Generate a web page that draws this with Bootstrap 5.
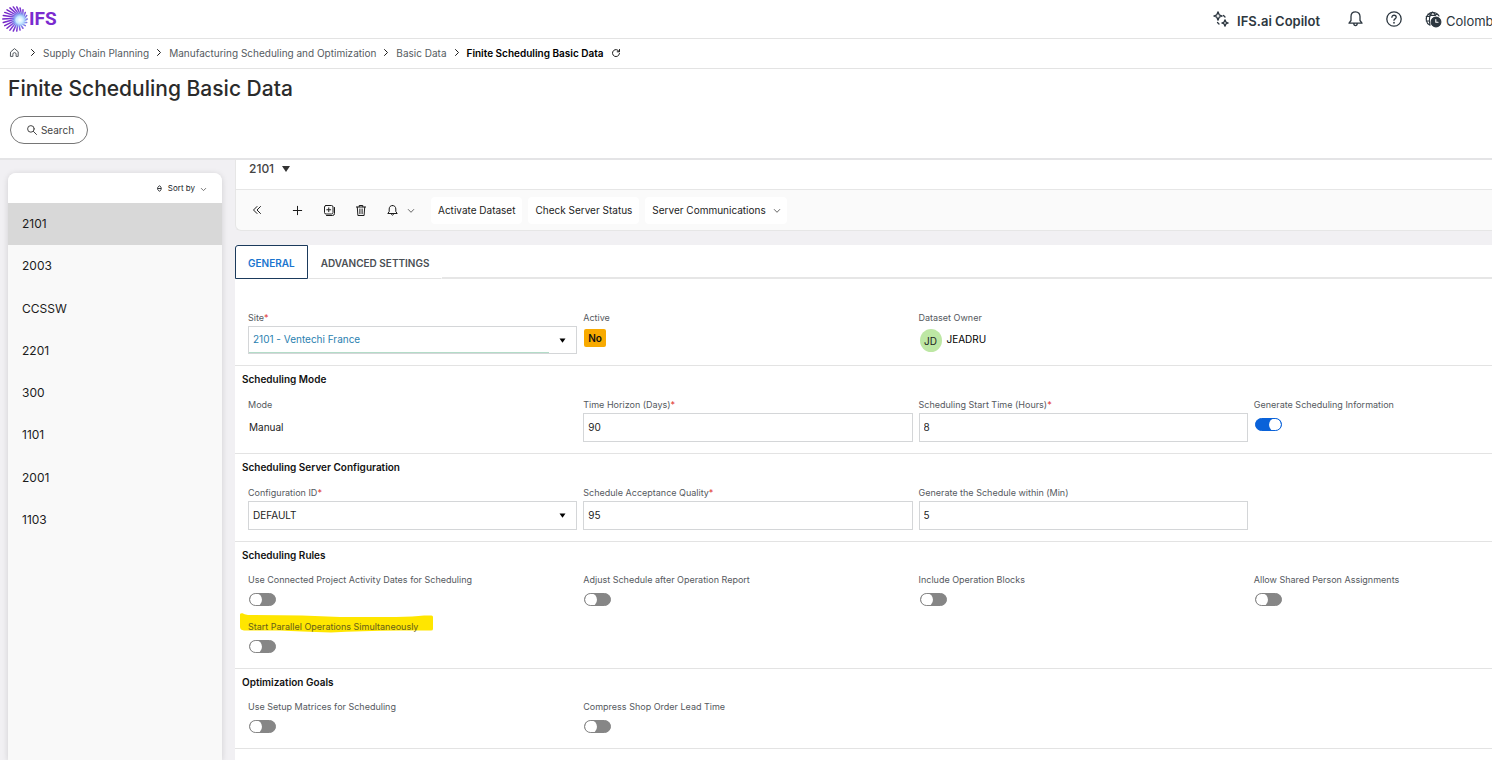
<!DOCTYPE html>
<html lang="en">
<head>
<meta charset="utf-8">
<meta name="viewport" content="width=device-width, initial-scale=1">
<title>Finite Scheduling Basic Data</title>
<link rel="stylesheet" href="https://cdn.jsdelivr.net/npm/bootstrap@5.3.0/dist/css/bootstrap.min.css">
<style>
  body { font-family: Inter, Roboto, sans-serif; font-size: 10px; line-height: 14px; color: #1c1c1c; background: #f1f0f3; }
  svg { display: block; fill: none; stroke: currentColor; stroke-linecap: round; stroke-linejoin: round; overflow: visible; flex: none; }
  .app { height: 100vh; overflow: hidden; }
  .line { border-color: #e3e3e3 !important; }

  .topbar { height: 39px; color: #2d3740; font-size: 13px; line-height: 18px; }
  .topbar .btn { --bs-btn-padding-x: 0; --bs-btn-padding-y: 0; --bs-btn-border-width: 0; --bs-btn-font-size: 13px; --bs-btn-line-height: 18px; --bs-btn-color: #2d3740; }
  .brand-mark { margin: 0 1px 0 2px; }
  .brand-text { font: 700 19px/24px Roboto, sans-serif; color: #7a2bcf; }
  .actions { gap: 23px; }
  .copilot { margin-right: 5px; }
  .place { width: 67px; overflow: hidden; white-space: nowrap; }

  .trail { height: 30px; padding: 0 10px 2px; gap: 8px; color: #1c1c1c; }
  .trail a { color: #555b61; text-decoration: none; }
  .trail .sep { width: 4px; height: 7px; }
  .page-head { height: 91px; padding: 6px 8px 0; border-bottom: 2px solid #e4e4e6; }
  .page-head h1 { font-size: 21px; line-height: 28px; font-weight: 500; color: #2b2b2b; margin: 0 0 13px; }
  .search-btn { --bs-btn-padding-x: 13px; --bs-btn-padding-y: 0; --bs-btn-font-size: 10px; --bs-btn-border-color: #767676; --bs-btn-color: #444; width: 78px; height: 28px; margin-left: 2px; padding-left: 16px; }

  .side { width: 214px; margin: 13px 13px 0 8px; background: #f9f9f9; border-radius: 8px 8px 0 0; box-shadow: 0 1px 6px rgba(0,0,0,.14); overflow: hidden; }
  .side-head { height: 30px; background: #fff; }
  .side-head .btn { --bs-btn-padding-x: 16px; --bs-btn-padding-y: 0; --bs-btn-font-size: 8px; --bs-btn-border-width: 0; gap: 6px; }
  .records { height: 338px; display: grid; grid-auto-rows: 1fr; --bs-list-group-bg: transparent; }
  .records .list-group-item { border: 0; padding: 0 14px; display: flex; align-items: center; font-size: 12px; color: #1c1c1c; }
  .records .list-group-item.active { background: #d8d8d8; margin: 0; }

  .panel-top { background: #fafafa; border: solid #e6e6e6; border-width: 0 0 1px 1px; border-bottom-left-radius: 6px; margin-bottom: 14px; overflow: hidden; }
  .record-bar { height: 30px; padding: 0 13px; background: #fff; border-bottom: 1px solid #e6e6e6; }
  .record-bar .btn { --bs-btn-padding-x: 0; --bs-btn-padding-y: 0; --bs-btn-border-width: 0; --bs-btn-font-size: 12px; --bs-btn-line-height: 18px; --bs-btn-color: #444; --bs-btn-font-weight: 500; gap: 8px; }
  .tools { height: 40px; padding-left: 5px; }
  .tools .btn { --bs-btn-padding-x: 6px; --bs-btn-padding-y: 0; --bs-btn-border-width: 0; --bs-btn-font-size: 10px; --bs-btn-border-radius: 4px; --bs-btn-color: #1c1c1c; height: 27px; white-space: nowrap; }
  .tools .icon-btn { width: 32px; }
  .tools .first { margin-right: 8px; }
  .tools .bell-btn { width: 54px; gap: 10px; padding-left: 10px; }
  .tools .cmd { background: #fff; padding: 0 7px; margin-right: 6px; }
  .chev { margin-top: 2px; color: #555; }

  .tabs { --bs-nav-tabs-border-width: 0; --bs-nav-link-padding-x: 12px; --bs-nav-link-padding-y: 0; background: #fff; }
  .tabs .nav-link { height: 34px; padding-top: 2px; font-size: 10px; font-weight: 600; line-height: 14px; color: #4a4f54; border: 1px solid transparent; border-bottom-color: #e3e3e3; border-radius: 0; margin: 0; }
  .tabs .nav-link.active { color: #1a75cf; border-color: #1b3a5c; border-top-left-radius: 3px; }
  .tab-rest { border-bottom: 2px solid #e6e6e6; }

  .form-panel { background: #fff; overflow: hidden; }
  .group { border-top: 1px solid #e3e3e3; padding: 6px 7px 11px; }
  .group h2 { font-size: 10px; line-height: 14px; font-weight: 600; margin: 0 0 13px; color: #111; }
  .group.plain { border-top: 0; padding-top: 33px; }
  .group.switches { padding-bottom: 15px; }
  .group.switches h2 { margin-bottom: 12px; }
  .group:last-child { padding-top: 9px; }
  /* the form is wider than the pane: its last column runs off the right side */
  .fields { --bs-gutter-x: 6px; --bs-gutter-y: 15px; width: calc(100% + 98px); margin-left: 3px; margin-right: 0; }
  .lbl { display: block; font-size: 9px; line-height: 12px; color: #55595e; }
  .lbl i { color: #e0322f; font-style: normal; }
  .box { height: 29px; margin-top: 2px; padding: 0 4px 1px; border: 1px solid #d4d6d8; border-radius: 0; font-size: 10px; line-height: 14px; color: #1c1c1c; }
  .val { height: 28px; margin: 2px 0 1px; padding-left: 1px; display: flex; align-items: center; }
  select.box { --bs-form-select-bg-img: none; background: url("data:image/svg+xml,%3Csvg xmlns='http://www.w3.org/2000/svg' viewBox='0 0 6 5'%3E%3Cpath d='M0 .5h6L3 4.8z'/%3E%3C/svg%3E") right 10px center / 7px 5px no-repeat; }
  select.site { height: 28px; padding-bottom: 2px; color: #2a7fb0; background: linear-gradient(#b3dcc8, #b3dcc8) left bottom / calc(100% - 27px) 1px no-repeat, url("data:image/svg+xml,%3Csvg xmlns='http://www.w3.org/2000/svg' viewBox='0 0 6 5'%3E%3Cpath d='M0 .5h6L3 4.8z'/%3E%3C/svg%3E") right 10px center / 7px 5px no-repeat; }
  .no-tag { margin: 5px 0 0 1px; padding: 2px 4px; height: 18px; font-size: 10px; line-height: 14px; font-weight: 600; background: #f8aa00; color: #111; border-radius: 2px; }
  .owner { margin: 5px 0 0 1px; gap: 5px; }
  .avatar { width: 22px; height: 23px; border-radius: 50%; background: #bde7a4; }
  .owner-name { padding-top: 3px; }
  .form-switch.tog { padding: 0; margin: 7px 0 0 1px; min-height: 13px; line-height: 0; }
  .form-switch.tog .form-check-input { float: none; display: block; margin: 0; width: 27px; height: 13px; border: 1px solid #868686; border-radius: 7px; background: #868686 url("data:image/svg+xml,%3Csvg xmlns='http://www.w3.org/2000/svg' viewBox='0 0 12 12'%3E%3Ccircle cx='6' cy='6' r='6' fill='white'/%3E%3C/svg%3E") left center / 12px 12px no-repeat; }
  .form-switch.tog .form-check-input:checked { background-color: #0a62d9; border-color: #0a62d9; background-position: right center; }
  .marked { position: relative; z-index: 0; }
  .marked svg { position: absolute; z-index: -1; left: -8px; top: -8px; fill: #ffe600; stroke: none; }
  .marked .lbl { color: #66601a; }
</style>
<script src="https://cdn.jsdelivr.net/npm/bootstrap@5.3.0/dist/js/bootstrap.bundle.min.js"></script>
</head>
<body>
<div class="app d-flex flex-column">

  <header class="topbar bg-white border-bottom line d-flex align-items-center flex-shrink-0">
    <a href="#" class="d-flex align-items-center text-decoration-none" aria-label="IFS">
      <svg class="brand-mark" width="26" height="26" viewBox="0 0 26 26">
        <defs>
          <radialGradient id="glow" gradientUnits="userSpaceOnUse" cx="18" cy="14" r="16">
            <stop offset=".12" stop-color="#c4e6ff"/><stop offset=".35" stop-color="#7f9cf0"/><stop offset=".6" stop-color="#7c3ad6"/><stop offset="1" stop-color="#7223c4"/>
          </radialGradient>
          <radialGradient id="core"><stop offset="0" stop-color="#fff"/><stop offset=".5" stop-color="#c9ecff"/><stop offset="1" stop-color="#a5c8ff" stop-opacity="0"/></radialGradient>
        </defs>
        <g id="rays" stroke="url(#glow)" stroke-width="1.5"></g>
        <circle cx="18" cy="14" r="6.500" fill="url(#core)" stroke="none"/>
      </svg>
      <span class="brand-text">IFS</span>
    </a>
    <div class="actions d-flex align-items-center ms-auto">
      <button class="btn copilot d-flex align-items-center fw-semibold">
        <svg width="16" height="16" viewBox="0 0 16 16" stroke-width="1.300" class="me-2"><path d="M5 .8 6.200 3.800 9.200 5 6.200 6.200 5 9.200 3.800 6.200.8 5 3.800 3.800zM12 8.800l.9 2.300 2.300.9-2.300.9-.9 2.300-.9-2.300-2.300-.9 2.300-.9zM10.500 4.500l1.500 1.500M4.500 11.500 6 13"/></svg>
        <span class="pt-1">IFS.ai Copilot</span>
      </button>
      <button class="btn" aria-label="Notifications">
        <svg width="15" height="16" viewBox="0 0 15 16" stroke-width="1.300"><path d="M7.500.8C4.500.8 3 3 3 5.500v4L1 12.200h13L12 9.500v-4C12 3 10.500.8 7.500.8zM5.800 12.500c0 2.700 3.400 2.700 3.400 0"/></svg>
      </button>
      <button class="btn" aria-label="Help">
        <svg width="16" height="16" viewBox="0 0 16 16" stroke-width="1.300"><circle cx="8" cy="8" r="7.200"/><path d="M5.900 6.300c0-2.800 4.300-2.700 4.300 0 0 1.500-2.200 1.600-2.200 3"/><path d="M8 11.700v.1" stroke-width="1.700"/></svg>
      </button>
      <button class="btn place d-flex align-items-center gap-1">
        <svg width="17" height="17" viewBox="0 0 17 17" stroke-width="1.100"><path d="M5 14.300A6.800 6.800 0 1 1 14 5M1.200 5.500h3.500M1.300 10h3M7.500 1C4.500 4 3.800 9 5 14M7.500 1c1.500 1 2.500 2 3 3.500M3 3.200c2 1.500 6.500 1.500 9 0"/><circle cx="11" cy="11" r="4.900" fill="#2d3740"/><path d="M10.800 8.500v2.700h2.200" stroke="#fff"/></svg>
        <span class="pt-1">Colombo</span>
      </button>
    </div>
  </header>

  <nav class="trail bg-white border-bottom line d-flex align-items-center flex-shrink-0" aria-label="Breadcrumb">
    <a href="#" aria-label="Home" class="me-1"><svg width="9" height="9" viewBox="0 0 9 9"><path d="M.8 3.800 4.500.6l3.700 3.200v4.600H6.100V6.200a1.600 1.600 0 0 0-3.200 0v2.200H.8z"/></svg></a>
    <svg class="sep" viewBox="0 0 4 7"><path d="M.5.5l3 3-3 3"/></svg>
    <a href="#">Supply Chain Planning</a>
    <svg class="sep" viewBox="0 0 4 7"><path d="M.5.5l3 3-3 3"/></svg>
    <a href="#">Manufacturing Scheduling and Optimization</a>
    <svg class="sep" viewBox="0 0 4 7"><path d="M.5.5l3 3-3 3"/></svg>
    <a href="#">Basic Data</a>
    <svg class="sep" viewBox="0 0 4 7"><path d="M.5.5l3 3-3 3"/></svg>
    <span class="fw-semibold text-black">Finite Scheduling Basic Data</span>
    <svg width="8" height="8" viewBox="0 0 8 8"><path d="M7.200 2.600A3.500 3.500 0 1 0 7.500 4.500M7.500.5v2.300H5.200"/></svg>
  </nav>

  <div class="page-head bg-white flex-shrink-0">
    <h1>Finite Scheduling Basic Data</h1>
    <button class="btn search-btn rounded-pill d-flex align-items-center justify-content-center gap-1">
      <svg width="10" height="10" viewBox="0 0 10 10" stroke="#222"><circle cx="3.900" cy="3.900" r="3.300"/><path d="M6.400 6.400 9.500 9.500"/></svg>Search
    </button>
  </div>

  <div class="d-flex flex-grow-1 overflow-hidden">
    <aside class="side flex-shrink-0">
      <div class="side-head d-flex align-items-center justify-content-end">
        <button class="btn d-flex align-items-center">
          <svg width="5" height="7" viewBox="0 0 5 7" stroke-width=".9"><path d="M1 2.200 2.500.6 4 2.200v2.600L2.500 6.400 1 4.800zM1 3.500h3"/></svg>
          Sort by
          <svg class="chev" width="5" height="3" viewBox="0 0 5 3" stroke-width=".8"><path d="M.3.400l2.200 2.200L4.700.4"/></svg>
        </button>
      </div>
      <div class="list-group list-group-flush records">
        <a href="#" class="list-group-item active" aria-current="true">2101</a>
        <a href="#" class="list-group-item">2003</a>
        <a href="#" class="list-group-item">CCSSW</a>
        <a href="#" class="list-group-item">2201</a>
        <a href="#" class="list-group-item">300</a>
        <a href="#" class="list-group-item">1101</a>
        <a href="#" class="list-group-item">2001</a>
        <a href="#" class="list-group-item">1103</a>
      </div>
    </aside>

    <main class="d-flex flex-column flex-grow-1 overflow-hidden">
      <div class="panel-top flex-shrink-0">
        <div class="record-bar d-flex align-items-start">
          <button class="btn d-flex align-items-center">2101 <svg width="8" height="6" viewBox="0 0 8 6"><path fill="#333" stroke="none" d="M0 0h8L4 6z"/></svg></button>
        </div>
        <div class="tools d-flex align-items-center">
          <button class="btn icon-btn first d-flex align-items-center justify-content-center" aria-label="Collapse"><svg width="8" height="8" viewBox="0 0 8 8"><path d="M4 .5.500 4 4 7.500M7.500.5 4 4l3.500 3.500"/></svg></button>
          <button class="btn icon-btn d-flex align-items-center justify-content-center" aria-label="New"><svg width="9" height="9" viewBox="0 0 9 9"><path d="M4.500.3v8.400M.3 4.500h8.400"/></svg></button>
          <button class="btn icon-btn d-flex align-items-center justify-content-center" aria-label="Duplicate"><svg width="11" height="11" viewBox="0 0 11 11"><rect x=".5" y=".5" width="8.500" height="8.500" rx="1.500"/><path d="M4.750 2.800v3.900M2.800 4.750h3.900M10.500 2.500v6a2 2 0 0 1-2 2h-6"/></svg></button>
          <button class="btn icon-btn d-flex align-items-center justify-content-center" aria-label="Delete"><svg width="10" height="11" viewBox="0 0 10 11"><path d="M.4 2h9.200M3.200 1.800V.5h3.600v1.300M1.300 2.200l.6 8.300h6.200l.6-8.300M3.900 4v4.700M6.100 4v4.700"/></svg></button>
          <button class="btn bell-btn d-flex align-items-center" aria-label="Alerts"><svg width="11" height="11" viewBox="0 0 11 11"><path d="M5.500.5C3.300.5 2.200 2 2.200 4v2.500L.8 8.500h9.400L8.800 6.500V4C8.800 2 7.700.5 5.500.5zM4.300 8.800c0 1.900 2.400 1.900 2.400 0"/></svg><svg class="chev" width="6" height="4" viewBox="0 0 6 4" stroke-width=".9"><path d="M.3.500 3 3.300 5.700.5"/></svg></button>
          <button class="btn cmd">Activate Dataset</button>
          <button class="btn cmd">Check Server Status</button>
          <button class="btn cmd d-flex align-items-center gap-2">Server Communications <svg class="chev" width="6" height="4" viewBox="0 0 6 4" stroke-width=".9"><path d="M.3.500 3 3.300 5.700.5"/></svg></button>
        </div>
      </div>

      <div class="nav nav-tabs tabs flex-shrink-0" role="tablist">
        <button class="nav-link active" role="tab" aria-selected="true">GENERAL</button>
        <button class="nav-link" role="tab" aria-selected="false">ADVANCED SETTINGS</button>
        <div class="tab-rest flex-grow-1"></div>
      </div>

      <form class="form-panel flex-grow-1">
        <section class="group plain">
          <div class="row fields">
            <div class="col-3"><label class="lbl" for="site">Site<i>*</i></label>
              <select id="site" class="form-select box site"><option>2101 - Ventechi France</option></select></div>
            <div class="col-3"><span class="lbl">Active</span><span class="badge no-tag d-inline-block">No</span></div>
            <div class="col-3"><span class="lbl">Dataset Owner</span>
              <div class="owner d-flex align-items-start"><span class="avatar d-flex align-items-center justify-content-center">JD</span><span class="owner-name text-black">JEADRU</span></div></div>
          </div>
        </section>

        <section class="group">
          <h2>Scheduling Mode</h2>
          <div class="row fields">
            <div class="col-3"><span class="lbl">Mode</span><div class="val">Manual</div></div>
            <div class="col-3"><label class="lbl" for="horizon">Time Horizon (Days)<i>*</i></label><input id="horizon" class="form-control box" value="90"></div>
            <div class="col-3"><label class="lbl" for="start">Scheduling Start Time (Hours)<i>*</i></label><input id="start" class="form-control box" value="8"></div>
            <div class="col-3"><label class="lbl" for="geninfo">Generate Scheduling Information</label><div class="form-check form-switch tog"><input id="geninfo" class="form-check-input" type="checkbox" role="switch" checked></div></div>
          </div>
        </section>

        <section class="group">
          <h2>Scheduling Server Configuration</h2>
          <div class="row fields">
            <div class="col-3"><label class="lbl" for="conf">Configuration ID<i>*</i></label><select id="conf" class="form-select box"><option>DEFAULT</option></select></div>
            <div class="col-3"><label class="lbl" for="quality">Schedule Acceptance Quality<i>*</i></label><input id="quality" class="form-control box" value="95"></div>
            <div class="col-3"><label class="lbl" for="within">Generate the Schedule within (Min)</label><input id="within" class="form-control box" value="5"></div>
          </div>
        </section>

        <section class="group switches">
          <h2>Scheduling Rules</h2>
          <div class="row fields">
            <div class="col-3"><label class="lbl" for="r1">Use Connected Project Activity Dates for Scheduling</label><div class="form-check form-switch tog"><input id="r1" class="form-check-input" type="checkbox" role="switch"></div></div>
            <div class="col-3"><label class="lbl" for="r2">Adjust Schedule after Operation Report</label><div class="form-check form-switch tog"><input id="r2" class="form-check-input" type="checkbox" role="switch"></div></div>
            <div class="col-3"><label class="lbl" for="r3">Include Operation Blocks</label><div class="form-check form-switch tog"><input id="r3" class="form-check-input" type="checkbox" role="switch"></div></div>
            <div class="col-3"><label class="lbl" for="r4">Allow Shared Person Assignments</label><div class="form-check form-switch tog"><input id="r4" class="form-check-input" type="checkbox" role="switch"></div></div>
            <div class="col-3"><div class="marked">
              <svg width="193" height="20" viewBox="0 0 193 20"><path d="M0 1.500Q0 0 2.500.2 4 1.500 8 2L40 2.200 62 2.400 100 4H156Q174 3.500 184 2.500H191.500Q193 2.500 193 4V16Q193 17.500 191 17.500H160Q120 18 91 19.600 60 18.500 40 17.500L4 17.500Q0 17 0 14z"/></svg>
              <label class="lbl" for="r5">Start Parallel Operations Simultaneously</label></div><div class="form-check form-switch tog"><input id="r5" class="form-check-input" type="checkbox" role="switch"></div></div>
          </div>
        </section>

        <section class="group switches">
          <h2>Optimization Goals</h2>
          <div class="row fields">
            <div class="col-3"><label class="lbl" for="g1">Use Setup Matrices for Scheduling</label><div class="form-check form-switch tog"><input id="g1" class="form-check-input" type="checkbox" role="switch"></div></div>
            <div class="col-3"><label class="lbl" for="g2">Compress Shop Order Lead Time</label><div class="form-check form-switch tog"><input id="g2" class="form-check-input" type="checkbox" role="switch"></div></div>
          </div>
        </section>

        <section class="group">
          <h2>Generation Properties</h2>
        </section>
      </form>
    </main>
  </div>
</div>
<script>
  // logo: rays that leave the off-centre core and end on the outer circle
  const rays = document.getElementById('rays');
  for (let i = 0; i < 22; i++) {
    const a = i * 2 * Math.PI / 22, b = a + 0.45;
    const ray = document.createElementNS('http://www.w3.org/2000/svg', 'path');
    ray.setAttribute('d', `M${17 + 4 * Math.cos(b)} ${14 + 4 * Math.sin(b)}L${13 + 12.2 * Math.cos(a)} ${13 + 12.2 * Math.sin(a)}`);
    rays.append(ray);
  }
</script>
</body>
</html>
